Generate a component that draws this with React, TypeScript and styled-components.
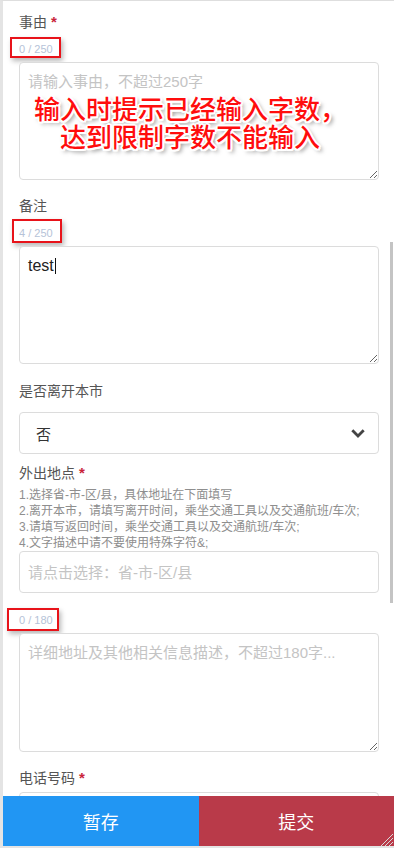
import React from "react";
import styled, { createGlobalStyle } from "styled-components";

const Global = createGlobalStyle`
  html, body { margin: 0; padding: 0; background: #fff; }
  body { font-family: "Liberation Sans", "Noto Sans CJK SC", sans-serif; }
  * { box-sizing: border-box; }
`;

const Frame = styled.div`
  position: relative;
  width: 394px;
  height: 848px;
  border-left: 3px solid #e4e4e4;
  border-top: 1px solid #dedede;
  border-bottom: 2px solid #e4e4e4;
  display: flex;
  overflow: hidden;
  background: #fff;
`;

const Content = styled.div`
  flex: 1;
  min-width: 0;
  padding: 11px 10px 0 16px;
`;

const Track = styled.div`
  width: 5px;
  flex-shrink: 0;
`;

const Thumb = styled.div`
  margin: 241px 0 0 1px;
  width: 3px;
  height: 361px;
  background: #c4c4c4;
`;

const Label = styled.div<{ $mt?: number }>`
  margin-top: ${(p) => p.$mt ?? 0}px;
  height: 20px;
  line-height: 20px;
  font-size: 14px;
  color: #555;
`;

const Star = styled.span`
  color: #c9243a;
  margin-left: 4px;
  font-size: 15px;
  font-weight: bold;
`;

const CounterRow = styled.div<{ $mt?: number }>`
  margin-top: ${(p) => p.$mt ?? 0}px;
  height: 14px;
  line-height: 14px;
  font-size: 11px;
  color: #b6c3d8;
`;

const CounterText = styled.span`
  position: relative;
  display: inline-block;
`;

const Mark = styled.span<{ $t: number; $r: number; $b: number; $l: number }>`
  position: absolute;
  top: ${(p) => -p.$t}px;
  right: ${(p) => -p.$r}px;
  bottom: ${(p) => -p.$b}px;
  left: ${(p) => -p.$l}px;
  border: 2px solid #e8131a;
  box-shadow: 2px 3px 5px rgba(0, 0, 0, 0.28);
`;

const AreaWrap = styled.div<{ $mt?: number }>`
  position: relative;
  margin-top: ${(p) => p.$mt ?? 0}px;
  width: 360px;
`;

const Area = styled.textarea<{ $h: number }>`
  display: block;
  width: 360px;
  height: ${(p) => p.$h}px;
  margin: 0;
  border: 1px solid #dcdcdc;
  border-radius: 4px;
  padding: 9px 8px;
  font-family: "Liberation Sans", "Noto Sans CJK SC", sans-serif;
  font-size: 16px;
  line-height: 20px;
  color: #222;
  resize: vertical;
  outline: none;
  background: #fff;
  &::placeholder {
    font-size: 15px;
    color: #c4c4c4;
  }
`;

const Caret = styled.span`
  position: absolute;
  left: 36px;
  top: 12px;
  width: 1px;
  height: 16px;
  background: #111;
`;

const Annotation = styled.div`
  position: absolute;
  top: 32px;
  left: 12px;
  width: 318px;
  text-align: center;
  font-family: "Noto Sans CJK SC", sans-serif;
  font-weight: 500;
  font-size: 26px;
  line-height: 28px;
  color: #ff0d0d;
  pointer-events: none;
  white-space: nowrap;
  text-shadow: -2px 0 #fff, 2px 0 #fff, 0 -2px #fff, 0 2px #fff,
    -1.5px -1.5px #fff, 1.5px 1.5px #fff, -1.5px 1.5px #fff, 1.5px -1.5px #fff,
    3px 3px 4px rgba(0, 0, 0, 0.5);
`;

const Select = styled.div<{ $mt?: number }>`
  margin-top: ${(p) => p.$mt ?? 0}px;
  width: 360px;
  height: 42px;
  border: 1px solid #dcdcdc;
  border-radius: 4px;
  display: flex;
  align-items: center;
  justify-content: space-between;
  padding: 0 13px 0 16px;
  font-size: 15px;
  color: #333;
`;

const Hints = styled.div<{ $mt?: number }>`
  margin-top: ${(p) => p.$mt ?? 0}px;
  font-size: 12px;
  line-height: 16px;
  color: #8e8e8e;
  white-space: nowrap;
`;

const Input = styled.input<{ $mt?: number }>`
  display: block;
  margin: ${(p) => p.$mt ?? 0}px 0 0 0;
  width: 360px;
  height: 42px;
  border: 1px solid #dcdcdc;
  border-radius: 4px;
  padding: 0 8px;
  font-family: "Liberation Sans", "Noto Sans CJK SC", sans-serif;
  font-size: 15px;
  outline: none;
  background: #fff;
  &::placeholder {
    color: #c4c4c4;
  }
`;

const ButtonBar = styled.div`
  position: absolute;
  left: 0;
  right: 0;
  bottom: 0;
  height: 50px;
  display: flex;
`;

const Button = styled.button<{ $tone: "save" | "submit" }>`
  position: relative;
  flex: 1;
  border: none;
  margin: 0;
  padding: 0;
  background: ${(p) => (p.$tone === "save" ? "#2196f3" : "#b93a49")};
  color: #fff;
  font-family: "Noto Sans CJK SC", sans-serif;
  font-size: 18px;
  line-height: 50px;
`;

const Grip = styled.svg`
  position: absolute;
  right: 1px;
  bottom: 0;
`;

const Chevron = () => (
  <svg width="14" height="9" viewBox="0 0 14 9">
    <polyline
      points="1.3,1.3 7,7 12.7,1.3"
      fill="none"
      stroke="#444"
      strokeWidth="2.8"
      strokeLinejoin="miter"
    />
  </svg>
);

type Box = { t: number; r: number; b: number; l: number };

const Counter = ({ text, mt, box }: { text: string; mt: number; box: Box }) => (
  <CounterRow $mt={mt}>
    <CounterText>
      {text}
      <Mark $t={box.t} $r={box.r} $b={box.b} $l={box.l} />
    </CounterText>
  </CounterRow>
);

export default function App() {
  return (
    <>
      <Global />
      <Frame>
        <Content>
          <Label>
            事由<Star>*</Star>
          </Label>
          <Counter text="0 / 250" mt={10} box={{ t: 5, r: 8, b: 2, l: 9 }} />
          <AreaWrap $mt={6}>
            <Area $h={118} placeholder="请输入事由，不超过250字" readOnly />
            <Annotation>
              输入时提示已经输入字数，
              <br />
              达到限制字数不能输入
            </Annotation>
          </AreaWrap>

          <Label $mt={16}>备注</Label>
          <Counter text="4 / 250" mt={10} box={{ t: 7, r: 9, b: 3, l: 7 }} />
          <AreaWrap $mt={6}>
            <Area $h={118} value="test" readOnly />
            <Caret />
          </AreaWrap>

          <Label $mt={17}>是否离开本市</Label>
          <Select $mt={11}>
            <span>否</span>
            <Chevron />
          </Select>

          <Label $mt={9}>
            外出地点<Star>*</Star>
          </Label>
          <Hints $mt={4}>
            1.选择省-市-区/县，具体地址在下面填写
            <br />
            2.离开本市，请填写离开时间，乘坐交通工具以及交通航班/车次;
            <br />
            3.请填写返回时间，乘坐交通工具以及交通航班/车次;
            <br />
            4.文字描述中请不要使用特殊字符&amp;;
          </Hints>
          <Input placeholder="请点击选择：省-市-区/县" readOnly />

          <Counter text="0 / 180" mt={20} box={{ t: 5, r: 6, b: 4, l: 12 }} />
          <AreaWrap $mt={6}>
            <Area $h={119} placeholder="详细地址及其他相关信息描述，不超过180字..." readOnly />
          </AreaWrap>

          <Label $mt={16}>
            电话号码<Star>*</Star>
          </Label>
          <Input $mt={4} readOnly />
        </Content>
        <Track>
          <Thumb />
        </Track>
        <ButtonBar>
          <Button $tone="save">暂存</Button>
          <Button $tone="submit">
            提交
            <Grip width="13" height="13" viewBox="0 0 13 13">
              <line x1="1" y1="13" x2="13" y2="1" stroke="#d9d9d9" strokeWidth="1" />
              <line x1="5" y1="13" x2="13" y2="5" stroke="#d9d9d9" strokeWidth="1" />
              <line x1="9" y1="13" x2="13" y2="9" stroke="#d9d9d9" strokeWidth="1" />
            </Grip>
          </Button>
        </ButtonBar>
      </Frame>
    </>
  );
}
